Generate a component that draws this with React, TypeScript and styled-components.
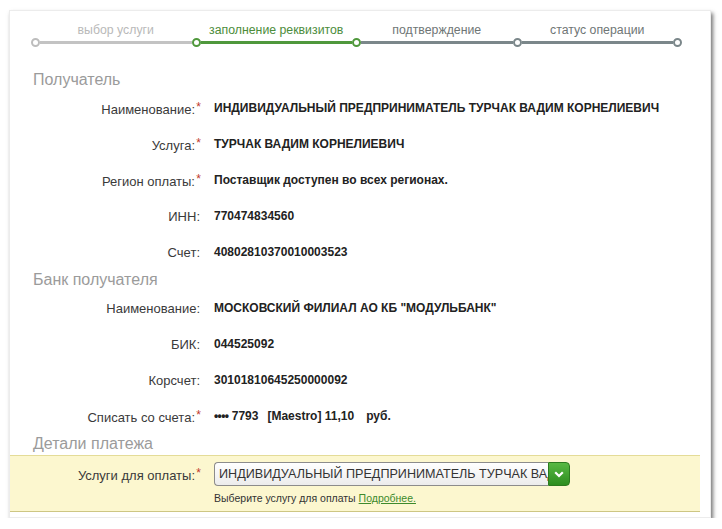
import React from 'react';
import styled, { createGlobalStyle } from 'styled-components';

const GlobalStyle = createGlobalStyle`
  body {
    margin: 0;
    background: #ffffff;
    font-family: "Liberation Sans", Arial, sans-serif;
  }
`;

const steps = [
  { label: 'выбор услуги', tone: 'done' },
  { label: 'заполнение реквизитов', tone: 'active' },
  { label: 'подтверждение', tone: 'todo' },
  { label: 'статус операции', tone: 'todo' },
] as const;

type Tone = 'done' | 'active' | 'todo';

const labelColors: Record<Tone, string> = {
  done: '#b9b9b9',
  active: '#4c8c3b',
  todo: '#6f7676',
};

const lineColors: Record<Tone, string> = {
  done: '#c3c3c3',
  active: '#4f983c',
  todo: '#7b878a',
};

// dot colours, left to right
const dotColors = ['#bdbdbd', '#4f983c', '#4f983c', '#7b878a', '#7b878a'];

const recipient = [
  { label: 'Наименование:', req: true, value: 'ИНДИВИДУАЛЬНЫЙ ПРЕДПРИНИМАТЕЛЬ ТУРЧАК ВАДИМ КОРНЕЛИЕВИЧ' },
  { label: 'Услуга:', req: true, value: 'ТУРЧАК ВАДИМ КОРНЕЛИЕВИЧ' },
  { label: 'Регион оплаты:', req: true, value: 'Поставщик доступен во всех регионах.' },
  { label: 'ИНН:', req: false, value: '770474834560' },
  { label: 'Счет:', req: false, value: '40802810370010003523' },
];

const bank = [
  { label: 'Наименование:', req: false, value: 'МОСКОВСКИЙ ФИЛИАЛ АО КБ "МОДУЛЬБАНК"' },
  { label: 'БИК:', req: false, value: '044525092' },
  { label: 'Корсчет:', req: false, value: '30101810645250000092' },
];

const App: React.FC = () => {
  return (
    <>
      <GlobalStyle />
      <Card>
        <Stepper>
          <StepLabels>
            {steps.map((s) => (
              <StepLabel key={s.label} tone={s.tone}>
                {s.label}
              </StepLabel>
            ))}
          </StepLabels>
          <Track>
            {steps.map((s, i) => (
              <React.Fragment key={s.label}>
                <Dot color={dotColors[i]} />
                <Line color={lineColors[s.tone]} />
              </React.Fragment>
            ))}
            <Dot color={dotColors[4]} />
          </Track>
        </Stepper>

        <SectionTitle>Получатель</SectionTitle>
        {recipient.map((r) => (
          <Row key={r.label}>
            <Label>
              {r.label}
              {r.req ? <Req>*</Req> : <NoReq />}
            </Label>
            <Value>{r.value}</Value>
          </Row>
        ))}

        <SectionTitle>Банк получателя</SectionTitle>
        {bank.map((r) => (
          <Row key={r.label + r.value}>
            <Label>
              {r.label}
              <NoReq />
            </Label>
            <Value>{r.value}</Value>
          </Row>
        ))}
        <Row>
          <Label>
            Списать со счета:<Req>*</Req>
          </Label>
          <Value>
            <Dots>••••</Dots> 7793
            <Gap w={9} />[Maestro] 11,10
            <Gap w={12} />руб.
          </Value>
        </Row>

        <SectionTitle>Детали платежа</SectionTitle>
        <Band>
          <BandRow>
            <Label>
              Услуги для оплаты:<Req>*</Req>
            </Label>
            <SelectWrap>
              <SelectBox>ИНДИВИДУАЛЬНЫЙ ПРЕДПРИНИМАТЕЛЬ ТУРЧАК ВАД</SelectBox>
              <SelectButton>
                <svg width="10" height="7" viewBox="0 0 10 7">
                  <path d="M1.2 1.2 L5 5 L8.8 1.2" fill="none" stroke="#ffffff" strokeWidth="2.2" />
                </svg>
              </SelectButton>
            </SelectWrap>
          </BandRow>
          <Hint>
            Выберите услугу для оплаты <HintLink href="#">Подробнее.</HintLink>
          </Hint>
        </Band>
      </Card>
    </>
  );
};

// Styled components
const Card = styled.div`
  box-sizing: border-box;
  width: 702px;
  height: 508px;
  margin: 10px 0 0 9px;
  background: #ffffff;
  border: 1px solid #ececec;
  box-shadow: 2px 3px 4px rgba(0, 0, 0, 0.55);
`;

const Stepper = styled.div`
  padding: 11px 0 0 21px;
  width: 651px;
`;

const StepLabels = styled.div`
  display: grid;
  grid-template-columns: repeat(4, 1fr);
  padding: 0 4.5px;
`;

const StepLabel = styled.div<{ tone: Tone }>`
  font-size: 12.3px;
  line-height: 16px;
  text-align: center;
  color: ${(p) => labelColors[p.tone]};
`;

const Track = styled.div`
  display: flex;
  align-items: center;
  height: 9px;
  margin-top: 0;
`;

const Dot = styled.span<{ color: string }>`
  box-sizing: border-box;
  flex: none;
  width: 9px;
  height: 9px;
  border-radius: 50%;
  border: 2px solid ${(p) => p.color};
  background: #ffffff;
`;

const Line = styled.span<{ color: string }>`
  flex: 1;
  height: 3px;
  background: ${(p) => p.color};
`;

const SectionTitle = styled.div`
  margin-top: 0;
  padding-left: 23px;
  font-size: 16px;
  line-height: 20px;
  color: #9b9b9b;

  ${Stepper} + & {
    margin-top: 23px;
  }
`;

const Row = styled.div`
  display: grid;
  grid-template-columns: 191px 1fr;
  column-gap: 13px;
  align-items: center;
  height: 36px;
`;

const Label = styled.div`
  text-align: right;
  font-size: 13px;
  color: #3a3a3a;
  white-space: nowrap;
`;

const Req = styled.span`
  display: inline-block;
  width: 6px;
  text-align: right;
  color: #c0392b;
  font-size: 12px;
  vertical-align: 3px;
`;

const NoReq = styled.span`
  display: inline-block;
  width: 1px;
`;

const Value = styled.div`
  font-size: 12px;
  font-weight: bold;
  color: #222222;
  white-space: nowrap;
`;

const Dots = styled.span`
  font-size: 12px;
  letter-spacing: -0.6px;
`;

const Gap = styled.span<{ w: number }>`
  display: inline-block;
  width: ${(p) => p.w}px;
`;

const Band = styled.div`
  margin: 1px 10px 0 0;
  padding: 6px 0 6px;
  background: #fcf7cf;
  border-top: 1px solid #e4dc98;
  border-bottom: 1px solid #cdc683;
`;

const BandRow = styled.div`
  display: grid;
  grid-template-columns: 191px 1fr;
  column-gap: 13px;
  align-items: center;
  height: 24px;
`;

const SelectWrap = styled.div`
  display: flex;
  width: 356px;
  height: 24px;
`;

const SelectBox = styled.div`
  box-sizing: border-box;
  width: 334px;
  height: 24px;
  padding: 0 4px;
  border: 1px solid #8c8c8c;
  border-right: none;
  border-radius: 4px 0 0 4px;
  background: linear-gradient(#ffffff, #ececec);
  font-size: 12.6px;
  line-height: 22px;
  color: #333333;
  white-space: nowrap;
  overflow: hidden;
`;

const SelectButton = styled.div`
  box-sizing: border-box;
  display: flex;
  align-items: center;
  justify-content: center;
  width: 22px;
  height: 24px;
  border-radius: 0 4px 4px 0;
  border: 1px solid #2c7a1f;
  background: linear-gradient(#58b843, #2d8d1f);
`;

const Hint = styled.div`
  margin-top: 5px;
  padding-left: 204px;
  font-size: 10.5px;
  line-height: 14px;
  color: #333333;
`;

const HintLink = styled.a`
  color: #3d8a2c;
  text-decoration: underline;
`;

export default App;
